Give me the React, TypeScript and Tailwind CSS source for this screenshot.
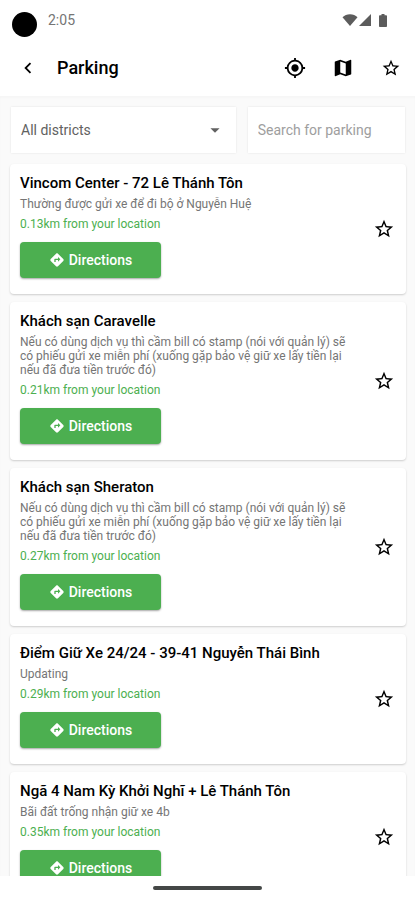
import { useState } from 'react'
import {
  MdArrowDropDown,
  MdChevronLeft,
  MdDirections,
  MdMap,
  MdMyLocation,
  MdStar,
  MdStarBorder
} from 'react-icons/md'

type Parking = {
  id: number
  name: string
  note: string
  distance: string
}

const parkings: Parking[] = [
  {
    id: 1,
    name: 'Vincom Center - 72 Lê Thánh Tôn',
    note: 'Thường được gửi xe để đi bộ ở Nguyễn Huệ',
    distance: '0.13km'
  },
  {
    id: 2,
    name: 'Khách sạn Caravelle',
    note: 'Nếu có dùng dịch vụ thì cầm bill có stamp (nói với quản lý) sẽ có phiếu gửi xe miễn phí (xuống gặp bảo vệ giữ xe lấy tiền lại nếu đã đưa tiền trước đó)',
    distance: '0.21km'
  },
  {
    id: 3,
    name: 'Khách sạn Sheraton',
    note: 'Nếu có dùng dịch vụ thì cầm bill có stamp (nói với quản lý) sẽ có phiếu gửi xe miễn phí (xuống gặp bảo vệ giữ xe lấy tiền lại nếu đã đưa tiền trước đó)',
    distance: '0.27km'
  },
  {
    id: 4,
    name: 'Điểm Giữ Xe 24/24 - 39-41 Nguyễn Thái Bình',
    note: 'Updating',
    distance: '0.29km'
  },
  {
    id: 5,
    name: 'Ngã 4 Nam Kỳ Khởi Nghĩ + Lê Thánh Tôn',
    note: 'Bãi đất trống nhận giữ xe 4b',
    distance: '0.35km'
  }
]

function StatusBar() {
  return (
    <div className="flex h-10 shrink-0 items-center pt-2 pr-7 pl-3">
      <span className="size-[25px] rounded-full bg-black" />
      <span className="ml-[11px] flex-1 pb-2 text-sm text-[#757575]">2:05</span>
      <div className="flex items-center pb-2 text-[#5c5c5c]">
        <svg className="h-3 w-4" viewBox="0 0 16 12" fill="currentColor">
          <path d="M8 12 0.5 3.2C2.5 1.3 5 0.3 8 0.3s5.500 1 7.500 2.900z" />
        </svg>
        <svg className="ml-px size-3" viewBox="0 0 12 12" fill="currentColor">
          <path d="M12 0v12H0z" />
        </svg>
        <svg className="ml-2 h-[13px] w-2" viewBox="0 0 8 13" fill="currentColor">
          <path d="M2.500 0h3v1.300H7.200c.4 0 .8.3.8.8v10.100c0 .5-.4.8-.8.8H.8c-.4 0-.8-.3-.8-.8V2.100c0-.5.4-.8.8-.8h1.700z" />
        </svg>
      </div>
    </div>
  )
}

function Header() {
  return (
    <header className="flex h-14 shrink-0 items-center bg-white pl-1">
      <button type="button" aria-label="Back" className="flex size-12 items-center justify-center">
        <MdChevronLeft className="size-[22px]" />
      </button>
      <h1 className="ml-[5px] flex-1 text-lg font-medium">Parking</h1>
      <button type="button" aria-label="My location" className="flex size-12 items-center justify-center">
        <MdMyLocation className="size-[22px]" />
      </button>
      <button type="button" aria-label="Map" className="flex size-12 items-center justify-center">
        <MdMap className="size-[22px]" />
      </button>
      <button type="button" aria-label="Favorites" className="flex size-12 items-center justify-center">
        <MdStarBorder className="size-5" />
      </button>
    </header>
  )
}

function Filters() {
  const [search, setSearch] = useState('')

  return (
    <div className="grid grid-cols-[10fr_7fr] gap-3 px-px">
      <div className="relative bg-white shadow-[0_0_2px_rgba(0,0,0,0.1)]">
        <select
          aria-label="District"
          className="h-[46px] w-full appearance-none bg-transparent px-2.5 text-sm text-[#616161] outline-none"
        >
          <option>All districts</option>
        </select>
        <MdArrowDropDown className="pointer-events-none absolute top-3 right-2.5 size-[22px] text-[#616161]" />
      </div>
      <input
        type="text"
        aria-label="Search for parking"
        placeholder="Search for parking"
        value={search}
        onChange={(e) => setSearch(e.target.value)}
        className="h-[46px] min-w-0 bg-white px-2.5 text-sm shadow-[0_0_2px_rgba(0,0,0,0.1)] outline-none placeholder:text-[#9e9e9e]"
      />
    </div>
  )
}

function ParkingCard({ parking }: { parking: Parking }) {
  const [saved, setSaved] = useState(false)
  const Star = saved ? MdStar : MdStarBorder

  return (
    <li className="flex items-center rounded bg-white px-2.5 shadow-[0_1px_2px_rgba(0,0,0,0.18)]">
      <div className="min-w-0 flex-1 pt-[9px] pb-4">
        <h2 className="mb-1 text-[15px] leading-5 font-medium">{parking.name}</h2>
        <p className="text-xs leading-[14px] text-[#757575]">{parking.note}</p>
        <p className="mt-1.5 text-xs leading-[14px] text-[#4caf50]">{parking.distance} from your location</p>
        <button
          type="button"
          className="mt-[11px] flex h-9 w-[141px] items-center justify-center gap-1 rounded bg-[#4caf50] text-sm font-medium text-white shadow-[0_1px_2px_rgba(0,0,0,0.35)]"
        >
          <MdDirections className="size-4" />
          Directions
        </button>
      </div>
      <button
        type="button"
        aria-label="Save parking"
        onClick={() => setSaved(!saved)}
        className="ml-4 flex w-6 items-center justify-center"
      >
        <Star className="size-[22px]" />
      </button>
    </li>
  )
}

export default function App() {
  return (
    <div className="flex h-screen flex-col overflow-hidden bg-white font-[Roboto,sans-serif] text-black">
      <StatusBar />
      <Header />
      <main className="min-h-0 flex-1 overflow-hidden bg-[#fafafa] pt-[11px] pr-[9px] pl-2.5 shadow-[inset_0_2px_2px_rgba(0,0,0,0.02)]">
        <Filters />
        <ul className="mt-[11px] flex flex-col gap-2">
          {parkings.map((parking) => (
            <ParkingCard key={parking.id} parking={parking} />
          ))}
        </ul>
      </main>
      <div className="flex h-6 shrink-0 items-center justify-center">
        <span className="h-1 w-[109px] rounded-full bg-[#444746]" />
      </div>
    </div>
  )
}
